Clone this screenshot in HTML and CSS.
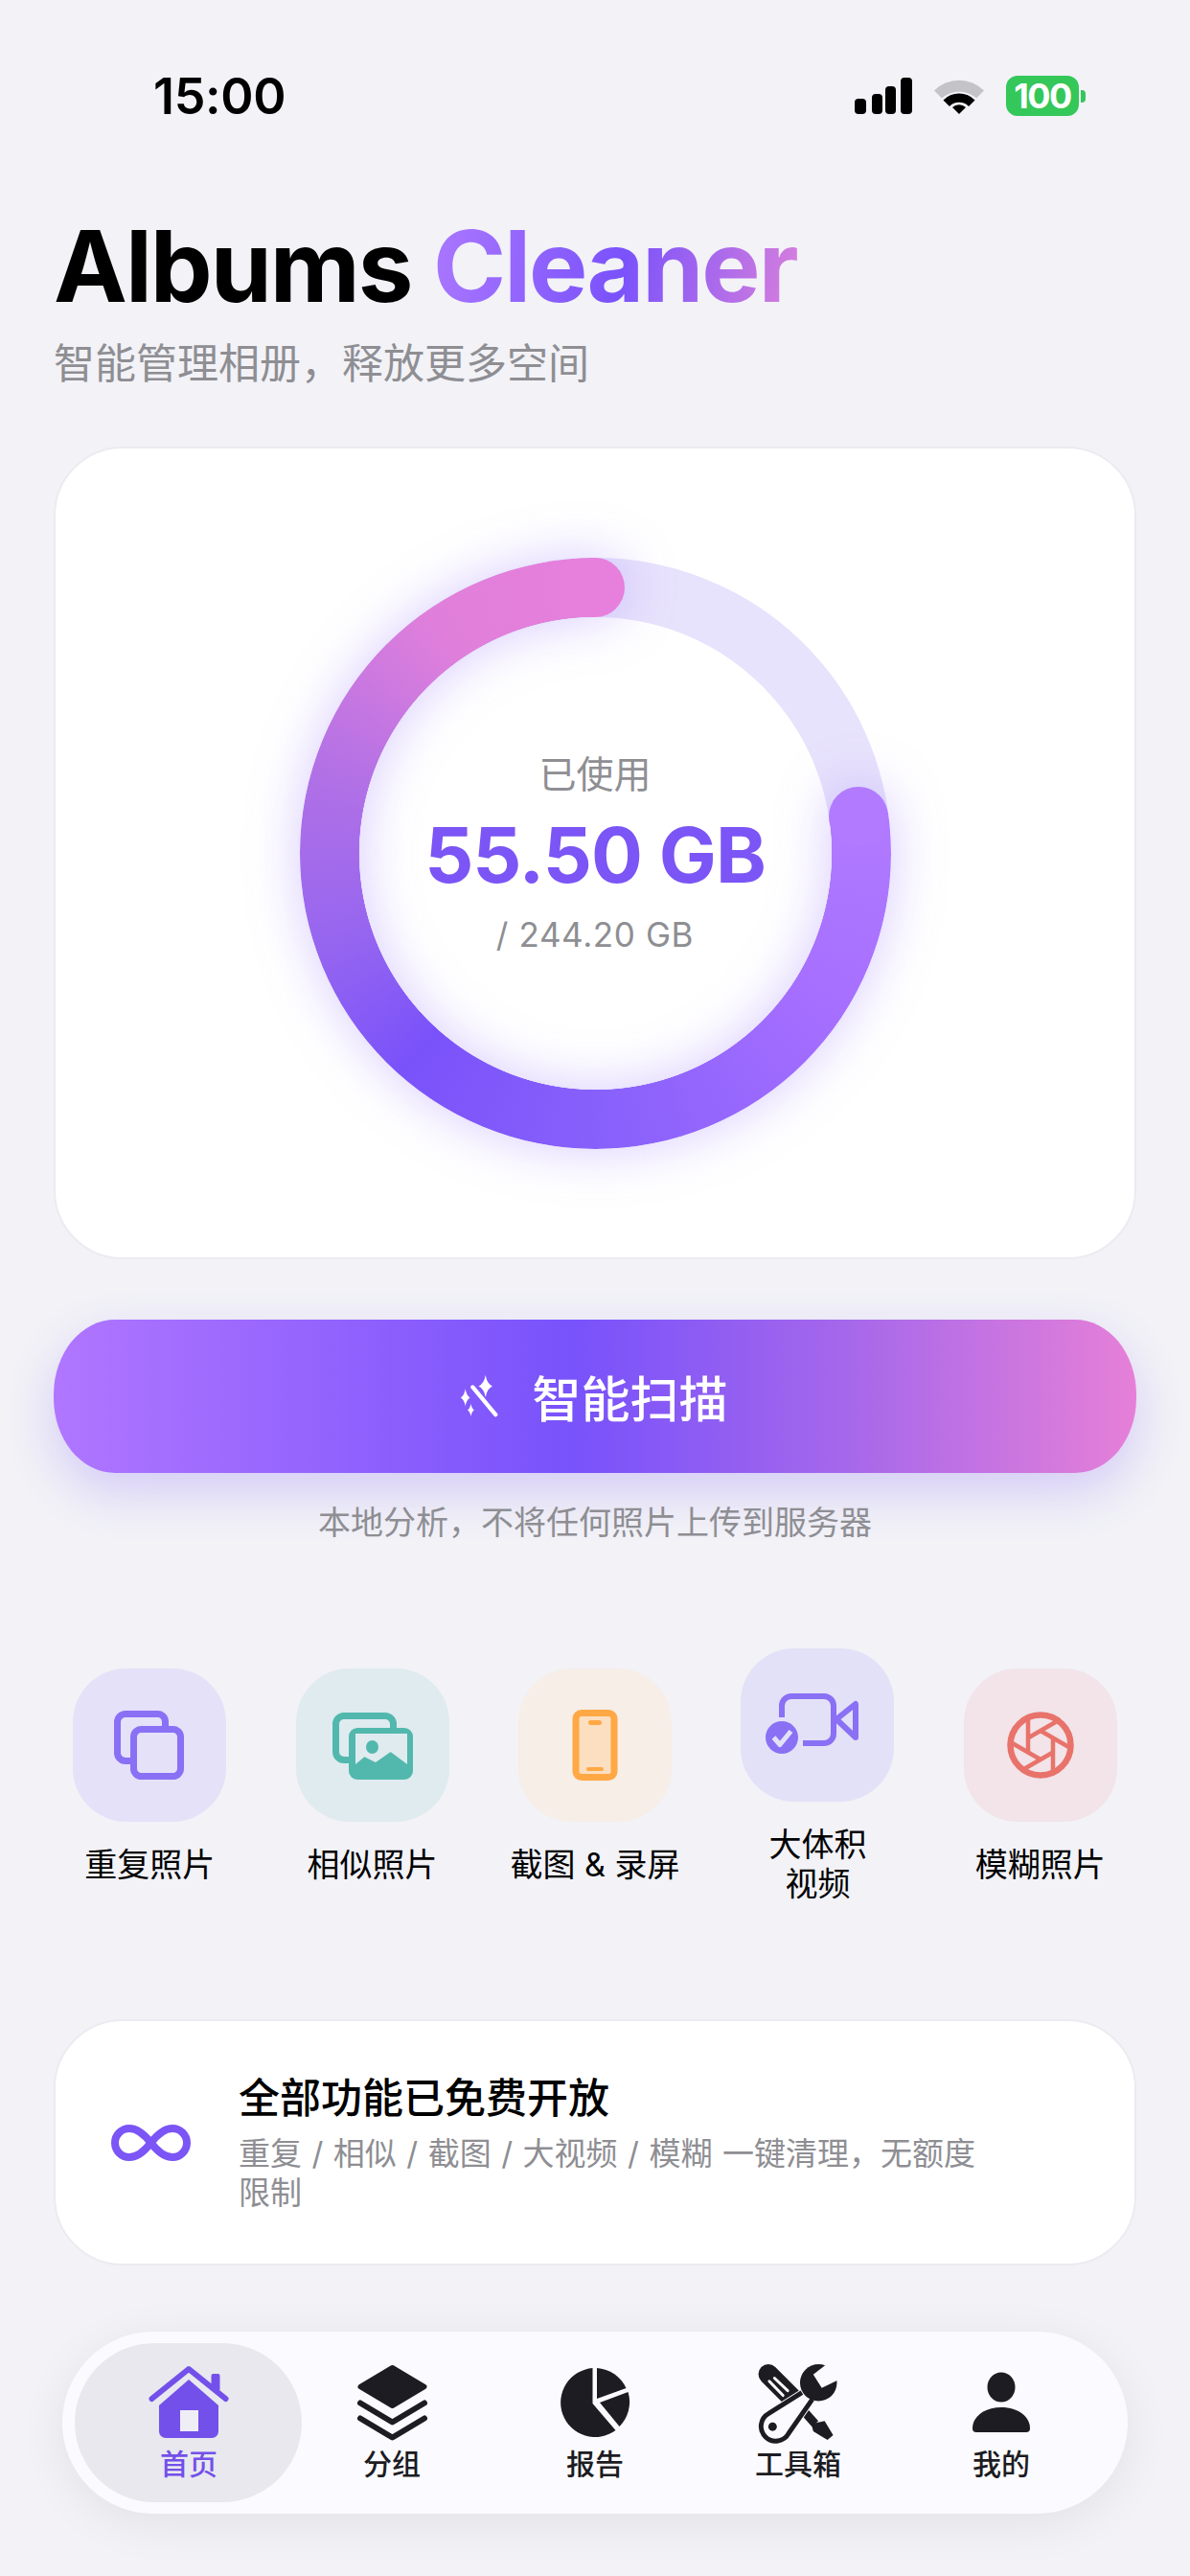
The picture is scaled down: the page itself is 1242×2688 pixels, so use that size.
FILE: index.html
```html
<!DOCTYPE html>
<html lang="zh-CN">
<head>
    <meta charset="UTF-8">
    <meta name="viewport" content="width=device-width, initial-scale=1.0">
    <title>Albums Cleaner</title>
    <link rel="stylesheet" href="styles.css">
</head>
<body>
    <header class="status-bar">
        <span class="time">15:00</span>
        <div class="status-icons">
            <svg class="signal" viewBox="0 0 60 38"><rect x="0" y="22" width="12" height="16" rx="4"/><rect x="18" y="17" width="11" height="21" rx="4"/><rect x="32" y="9" width="11" height="29" rx="4"/><rect x="48" y="0" width="12" height="38" rx="4"/></svg>
            <svg class="wifi" viewBox="0 0 52 38"><path fill="#c4c4c8" d="M0 13.5A37 37 0 0 1 52 13.5L44 21.5A27 27 0 0 0 8 21.5Z"/><path d="M9.500 23.500A23 23 0 0 1 42.500 23.500L36 30A14 14 0 0 0 16 30Z"/><path d="M19 31A10 10 0 0 1 33 31L26 38Z"/></svg>
            <div class="battery"><span class="battery-level">100</span><span class="battery-nub"></span></div>
        </div>
    </header>

    <main class="page">
        <h1 class="title">Albums <span class="title-accent">Cleaner</span></h1>
        <p class="subtitle">智能管理相册，释放更多空间</p>

        <section class="usage-card">
            <div class="ring">
                <div class="ring-track"></div>
                <div class="ring-glow">
                    <div class="ring-arc"></div>
                    <span class="ring-cap ring-cap-start"></span>
                    <span class="ring-cap ring-cap-end"></span>
                </div>
                <div class="ring-text">
                    <span class="ring-label">已使用</span>
                    <span class="ring-used">55.50 GB</span>
                    <span class="ring-total">/ 244.20 GB</span>
                </div>
            </div>
        </section>

        <button class="scan-btn" type="button">
            <svg class="wand" viewBox="0 0 50 46" fill="#fff">
                <path d="M17 13L42 43" fill="none" stroke="#fff" stroke-width="4.500" stroke-linecap="round"/>
                <path d="M31 0Q32.500 9 38.500 12Q32.500 15 31 24Q29.500 15 23.500 12Q29.500 9 31 0Z"/>
                <path d="M9 15Q10 22 14 24.500Q10 27 9 34Q8 27 4 24.500Q8 22 9 15Z"/>
                <path d="M15 31Q15.800 36 18.500 38Q15.800 40 15 45Q14.200 40 11.500 38Q14.200 36 15 31Z"/>
            </svg>
            <span>智能扫描</span>
        </button>
        <p class="scan-note">本地分析，不将任何照片上传到服务器</p>

        <section class="tools">
            <div class="tool">
                <div class="tile tile-purple">
                    <svg viewBox="0 0 100 100" fill="none" stroke="#8a70f5" stroke-width="7">
                        <path d="M66.500 30V25.500a8 8 0 0 0-8-8H25a8.500 8.500 0 0 0-8.500 8.500V58a8.500 8.500 0 0 0 8.500 8.500H33"/>
                        <rect x="33.500" y="33.500" width="49" height="49" rx="8"/>
                    </svg>
                </div>
                <span class="tool-name">重复照片</span>
            </div>
            <div class="tool">
                <div class="tile tile-teal">
                    <svg viewBox="0 0 100 100" fill="#52b8ae">
                        <path d="M25 65.500H20a8.500 8.500 0 0 1-8.500-8.500V28a8.500 8.500 0 0 1 8.500-8.500H63a8.500 8.500 0 0 1 8.500 8.500V32" fill="none" stroke="#52b8ae" stroke-width="7"/>
                        <rect x="25" y="32" width="67" height="54" rx="9"/>
                        <rect x="32" y="38" width="54" height="34" fill="#dfebef"/>
                        <path d="M32 70L41 62.500Q42 62 43 63L53 68L68 57.500Q69 57 70 58L86 70V78H32Z"/>
                        <ellipse cx="49.500" cy="52" rx="6.500" ry="7"/>
                    </svg>
                </div>
                <span class="tool-name">相似照片</span>
            </div>
            <div class="tool">
                <div class="tile tile-orange">
                    <svg viewBox="0 0 100 100" fill="#ffa845">
                        <rect x="30" y="16.500" width="40" height="67" rx="6" fill="#fbdfc0" stroke="#ffa845" stroke-width="7"/>
                        <rect x="43" y="24" width="14" height="5" rx="2.500"/>
                        <rect x="41" y="73" width="18" height="4" rx="2"/>
                    </svg>
                </div>
                <span class="tool-name">截图 &amp; 录屏</span>
            </div>
            <div class="tool">
                <div class="tile tile-violet">
                    <svg viewBox="0 0 100 100" fill="none" stroke="#8a70f5" stroke-width="6" stroke-linejoin="round">
                        <path d="M13 42V30a10 10 0 0 1 10-10H57a10 10 0 0 1 10 10V59a10 10 0 0 1-10 10H35"/>
                        <path d="M70 44L90 28V63Z"/>
                        <circle cx="13" cy="63" r="17" fill="#8a70f5" stroke="none"/>
                        <path d="M4.500 63L11 70.500L22.500 56.500" stroke="#e3e1f7" stroke-width="5"/>
                    </svg>
                </div>
                <span class="tool-name">大体积<br>视频</span>
            </div>
            <div class="tool">
                <div class="tile tile-red">
                    <svg viewBox="0 0 100 100" fill="none" stroke="#e8736b">
                        <circle cx="50" cy="50" r="31.500" stroke-width="6.500"/>
                        <g stroke-width="4.500">
                            <path d="M37 19V57.500"/>
                            <path d="M37 19V57.500" transform="rotate(60 50 50)"/>
                            <path d="M37 19V57.500" transform="rotate(120 50 50)"/>
                            <path d="M37 19V57.500" transform="rotate(180 50 50)"/>
                            <path d="M37 19V57.500" transform="rotate(240 50 50)"/>
                            <path d="M37 19V57.500" transform="rotate(300 50 50)"/>
                        </g>
                    </svg>
                </div>
                <span class="tool-name">模糊照片</span>
            </div>
        </section>

        <section class="free-card">
            <svg class="infinity" viewBox="0 0 83 38" fill="none" stroke="#7b55f5" stroke-width="8">
                <path d="M41.500 19C33 8 26 4 19 4A15 15 0 0 0 19 34C26 34 33 30 41.500 19C50 8 57 4 64 4A15 15 0 0 1 64 34C57 34 50 30 41.500 19Z"/>
            </svg>
            <div class="free-text">
                <h2 class="free-title">全部功能已免费开放</h2>
                <p class="free-desc">重复 / 相似 / 截图 / 大视频 / 模糊 一键清理，无额度限制</p>
            </div>
        </section>

        <nav class="tabbar">
            <a class="tab tab-active">
                <svg class="tab-home" viewBox="0 0 84 76" fill="#7350ea">
                    <rect x="65.500" y="8" width="9" height="18" rx="2"/>
                    <path d="M3.500 34L42 3L80.500 34" fill="none" stroke="#7350ea" stroke-width="6" stroke-linecap="round" stroke-linejoin="round"/>
                    <path d="M42 14L73 41V68a7 7 0 0 1-7 7H18a7 7 0 0 1-7-7V41Z"/>
                    <rect x="33" y="46" width="19" height="22" fill="#efeef6"/>
                </svg>
                <span>首页</span>
            </a>
            <a class="tab">
                <svg class="tab-layers" viewBox="0 0 73 79" fill="#1c1c22" stroke="#1c1c22" stroke-linecap="round" stroke-linejoin="round">
                    <path d="M36.500 3L70 23L36.500 43L3 23Z" stroke-width="5"/>
                    <path d="M3 40L36.500 60L70 40" fill="none" stroke-width="6"/>
                    <path d="M3 56L36.500 76L70 56" fill="none" stroke-width="6"/>
                </svg>
                <span>分组</span>
            </a>
            <a class="tab">
                <svg class="tab-pie" viewBox="0 0 72 72" fill="#1c1c22">
                    <path d="M33.500 0.100A36 36 0 1 0 57.500 65L33.500 37Z"/>
                    <path d="M38 0A36 36 0 0 1 68.500 21L38 32Z"/>
                    <path d="M41 36L70.500 25A36 36 0 0 1 61.500 61Z"/>
                </svg>
                <span>报告</span>
            </a>
            <a class="tab">
                <svg class="tab-tools" viewBox="0 0 84 81" fill="#1c1c22">
                    <path d="M10.500 10.500L35 35" stroke="#1c1c22" stroke-width="21" stroke-linecap="round"/>
                    <path d="M35 35L60 63" stroke="#1c1c22" stroke-width="9"/>
                    <path d="M56 63L70 60L79 75L73 80L58 71Z"/>
                    <path d="M11.500 18L26 33M17 14.700L31 28" stroke="#fbfbff" stroke-width="3" stroke-linecap="round"/>
                    <circle cx="63.500" cy="19.500" r="21" fill="#fbfbff"/>
                    <path d="M46 30L11 52A15.500 15.500 0 1 0 32 73L57 37" fill="#fbfbff" stroke="#fbfbff" stroke-width="7"/>
                    <path d="M46 30L11 52A15.500 15.500 0 1 0 32 73L57 37" fill="#fbfbff" stroke="#1c1c22" stroke-width="5"/>
                    <circle cx="63.500" cy="19.500" r="19.500"/>
                    <path d="M76 -3L58 11L67 25L90 14Z" fill="#fbfbff"/>
                    <circle cx="15" cy="66" r="4.500"/>
                </svg>
                <span>工具箱</span>
            </a>
            <a class="tab">
                <svg class="tab-person" viewBox="0 0 60 76" fill="#1c1c22">
                    <ellipse cx="30" cy="22" rx="14.500" ry="15.500"/>
                    <path d="M30 43C12 43 0 53 0 65a4 4 0 0 0 4 4H56a4 4 0 0 0 4-4C60 53 48 43 30 43Z"/>
                </svg>
                <span>我的</span>
            </a>
        </nav>
    </main>
</body>
</html>
```

FILE: styles.css
```css
* {
    box-sizing: border-box;
}
html, body {
    margin: 0;
    padding: 0;
}
body {
    width: 1242px;
    height: 2688px;
    overflow: hidden;
    background-color: #f2f2f7;
    font-family: Inter, "Noto Sans CJK SC", sans-serif;
    color: #000;
}

/* status bar */
.status-bar {
    height: 200px;
    display: flex;
    justify-content: space-between;
    align-items: center;
    padding: 0 109px 0 160px;
}
.time {
    font-size: 52px;
    font-weight: 600;
    letter-spacing: -0.3px;
}
.status-icons {
    display: flex;
    align-items: center;
    gap: 23px;
}
.signal {
    width: 60px;
    height: 38px;
}
.wifi {
    width: 52px;
    height: 38px;
}
.battery {
    display: flex;
    align-items: center;
    gap: 2px;
}
.battery-level {
    width: 76px;
    height: 42px;
    border-radius: 12px;
    background-color: #34c759;
    color: #fff;
    font-size: 36px;
    font-weight: 700;
    letter-spacing: -1.5px;
    line-height: 42px;
    text-align: center;
}
.battery-nub {
    width: 5px;
    height: 13px;
    border-radius: 0 4px 4px 0;
    background-color: #34c759;
}

/* page */
.page {
    padding: 18px 56px 0;
    display: flex;
    flex-direction: column;
}
.title {
    margin: 0;
    font-size: 103px;
    font-weight: 700;
    line-height: 120px;
    letter-spacing: -2px;
}
.title-accent {
    background: linear-gradient(100deg, #ab78ff 0%, #7a52fb 52%, #d980dc 100%);
    -webkit-background-clip: text;
    background-clip: text;
    color: transparent;
}
.subtitle {
    margin: 11px 0 0;
    font-size: 43px;
    line-height: 60px;
    color: #8e8e93;
}

/* usage ring */
.usage-card {
    margin-top: 57px;
    height: 848px;
    background: #fff;
    border: 2px solid #ebebf1;
    border-radius: 72px;
    display: flex;
    align-items: center;
    justify-content: center;
}
.ring {
    position: relative;
    width: 617px;
    height: 617px;
    display: flex;
    align-items: center;
    justify-content: center;
}
.ring-track {
    position: absolute;
    inset: 0;
    border-radius: 50%;
    border: 62px solid #e8e3fc;
}
.ring-glow {
    position: absolute;
    inset: 0;
    filter: drop-shadow(0 0 28px rgba(122, 82, 248, 0.3));
}
.ring-arc {
    position: absolute;
    inset: 0;
    border-radius: 50%;
    background: conic-gradient(transparent 0deg 82deg, #b17aff 82deg, #a56eff 125deg, #8760fb 180deg, #7a52fa 222deg, #9565f0 250deg, #b070e6 285deg, #e07fdb 325deg, #e680dc 360deg);
    -webkit-mask: radial-gradient(circle closest-side, transparent calc(100% - 62px), #000 calc(100% - 61.5px));
    mask: radial-gradient(circle closest-side, transparent calc(100% - 62px), #000 calc(100% - 61.5px));
}
.ring-cap {
    position: absolute;
    width: 62px;
    height: 62px;
    border-radius: 50%;
}
.ring-cap-start {
    left: 277.500px;
    top: 0;
    background-color: #e680dc;
}
.ring-cap-end {
    left: 552.500px;
    top: 239px;
    background-color: #b17aff;
}
.ring-text {
    position: relative;
    display: flex;
    flex-direction: column;
    align-items: center;
}
.ring-label {
    font-size: 39px;
    line-height: 50px;
    color: #8e8e93;
}
.ring-used {
    margin-top: 9px;
    font-size: 80px;
    font-weight: 700;
    line-height: 100px;
    letter-spacing: -1px;
    color: #7b55f5;
}
.ring-total {
    margin-top: 10px;
    font-size: 35px;
    line-height: 46px;
    letter-spacing: 0.6px;
    color: #8e8e93;
}

/* scan button */
.scan-btn {
    margin-top: 63px;
    height: 160px;
    border: none;
    border-radius: 64px / 78px;
    background: linear-gradient(90deg, #b076ff 0%, #7852fb 48%, #a768ea 74%, #e680d8 100%);
    box-shadow: 0 20px 50px rgba(122, 82, 248, 0.24);
    color: #fff;
    display: flex;
    align-items: center;
    justify-content: center;
    gap: 30px;
    font-family: inherit;
    font-size: 51px;
    font-weight: 500;
    padding: 0 5px 0 0;
}
.wand {
    width: 48px;
    height: 44px;
}
.scan-note {
    margin: 30px 0 0;
    font-size: 34px;
    line-height: 44px;
    text-align: center;
    color: #8e8e93;
    position: relative;
}

/* tool shortcuts */
.tools {
    margin: 109px -16px 0;
    display: grid;
    grid-template-columns: repeat(5, 1fr);
    align-items: center;
}
.tool {
    display: flex;
    flex-direction: column;
    align-items: center;
    gap: 24px;
}
.tile {
    width: 160px;
    height: 160px;
    border-radius: 56px;
    display: flex;
    align-items: center;
    justify-content: center;
}
.tile svg {
    width: 100px;
    height: 100px;
    overflow: visible;
}
.tile-purple { background-color: #e4e1f8; }
.tile-teal { background-color: #dfebef; }
.tile-orange { background-color: #f6eee7; }
.tile-violet { background-color: #e3e1f7; }
.tile-red { background-color: #f2e4e9; }
.tool-name {
    font-size: 34px;
    line-height: 41px;
    text-align: center;
}

/* free banner */
.free-card {
    margin-top: 121px;
    height: 257px;
    background: #fff;
    border: 2px solid #ebebf1;
    border-radius: 72px;
    display: flex;
    align-items: center;
    gap: 50px;
    padding-left: 58px;
}
.infinity {
    width: 83px;
    height: 38px;
    flex: none;
}
.free-text {
    width: 790px;
}
.free-title {
    margin: 0;
    font-size: 43px;
    font-weight: 500;
    line-height: 50px;
    padding-top: 2px;
}
.free-desc {
    margin: 13px 0 0;
    font-size: 33px;
    line-height: 41px;
    word-spacing: 1.200px;
    color: #8e8e93;
}

/* tab bar */
.tabbar {
    margin: 69px 9px 0;
    height: 190px;
    padding: 0 26px;
    border-radius: 95px;
    background-color: #fbfbff;
    box-shadow: 0 10px 50px rgba(0, 0, 0, 0.07);
    display: flex;
    align-items: flex-start;
}
.tab {
    position: relative;
    width: 212.500px;
    height: 190px;
    padding-top: 34px;
    display: flex;
    flex-direction: column;
    align-items: center;
    font-size: 30px;
    font-weight: 500;
    color: #1c1c22;
}
.tab svg,
.tab span {
    position: relative;
}
.tab span {
    margin-top: 6px;
    line-height: 36px;
}
.tab svg {
    height: 80px;
    overflow: visible;
}
.tab-active {
    color: #7350ea;
}
.tab-active::before {
    content: "";
    position: absolute;
    left: -13px;
    top: 12px;
    width: 237px;
    height: 166px;
    border-radius: 83px;
    background-color: #e8e8ee;
}
.tab-home { width: 84px; }
.tab-layers { width: 73px; }
.tab-pie { width: 72px; }
.tab-tools { width: 84px; }
.tab-person { width: 60px; }
```
